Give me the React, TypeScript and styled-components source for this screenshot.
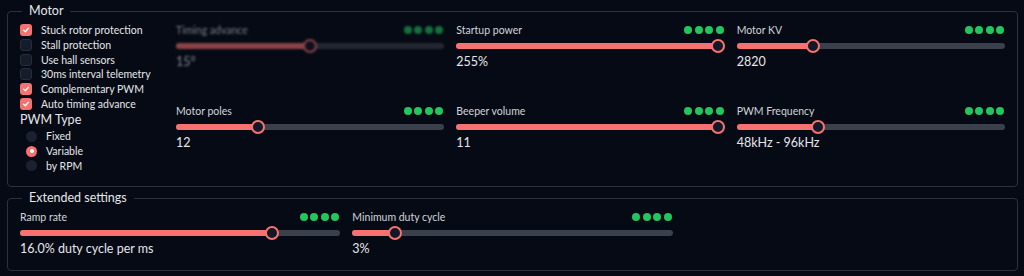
import React from "react";
import styled, { createGlobalStyle, css } from "styled-components";

const GlobalStyle = createGlobalStyle`
  html, body {
    margin: 0;
    padding: 0;
    background: #060a14;
    font-family: Lato, "Noto Sans", sans-serif;
    color: #e5e7eb;
  }
`;

const Page = styled.div`
  padding: 3px 6px 0 7px;
  display: flex;
  flex-direction: column;
  gap: 3px;
`;

const Fieldset = styled.fieldset<{ $bottom: number }>`
  margin: 0;
  border: 1px solid #2b313d;
  border-radius: 4px;
  padding: 4px 12px ${(p) => p.$bottom}px 12px;
  min-width: 0;
`;

const Legend = styled.legend`
  padding: 0 7px;
  margin-left: 2px;
  font-size: 12.5px;
  line-height: 16px;
  color: #e5e7eb;
`;

const MotorBody = styled.div`
  display: flex;
  gap: 12px;
`;

const Options = styled.div`
  width: 144px;
  flex-shrink: 0;
  display: flex;
  flex-direction: column;
`;

const CheckRow = styled.label`
  display: flex;
  align-items: center;
  height: 14.7px;
  font-size: 10.5px;
  color: #e5e7eb;
  white-space: nowrap;
`;

const Box = styled.span<{ $checked: boolean }>`
  width: 12px;
  height: 12px;
  box-sizing: border-box;
  border-radius: 3px;
  margin-right: 9px;
  display: flex;
  align-items: center;
  justify-content: center;
  ${(p) =>
    p.$checked
      ? css`
          background: #f87171;
        `
      : css`
          background: #161c29;
          border: 1px solid #262d3b;
        `}
`;

const GroupTitle = styled.div`
  font-size: 12.5px;
  line-height: 18px;
  color: #e5e7eb;
`;

const RadioRow = styled.label`
  display: flex;
  align-items: center;
  height: 14.7px;
  padding-left: 6px;
  font-size: 10.5px;
  color: #e5e7eb;
`;

const Radio = styled.span<{ $checked: boolean }>`
  width: 11px;
  height: 11px;
  border-radius: 50%;
  margin-right: 9px;
  display: flex;
  align-items: center;
  justify-content: center;
  background: ${(p) => (p.$checked ? "#f87171" : "#1b2131")};
  &::after {
    content: "";
    display: ${(p) => (p.$checked ? "block" : "none")};
    width: 4px;
    height: 4px;
    border-radius: 50%;
    background: #ffffff;
  }
`;

const SliderGrid = styled.div`
  flex: 1;
  display: grid;
  grid-template-columns: repeat(3, 1fr);
  column-gap: 12px;
  row-gap: 35px;
  align-content: start;
`;

const SliderBlock = styled.div<{ $disabled?: boolean }>`
  display: flex;
  flex-direction: column;
  min-width: 0;
  ${(p) =>
    p.$disabled &&
    css`
      filter: blur(1px);
      opacity: 0.55;
    `}
`;

const SliderHead = styled.div`
  display: flex;
  justify-content: space-between;
  align-items: center;
  height: 14px;
`;

const SliderLabel = styled.span`
  font-size: 10.5px;
  color: #d1d5db;
`;

const Dots = styled.div`
  display: flex;
  gap: 2.5px;
  padding-right: 1px;
`;

const Dot = styled.span`
  width: 8px;
  height: 8px;
  border-radius: 50%;
  background: #22c55e;
`;

const TrackWrap = styled.div`
  position: relative;
  height: 16px;
  margin-top: 1px;
  display: flex;
  align-items: center;
`;

const Track = styled.div`
  width: 100%;
  height: 6px;
  border-radius: 3px;
  background: #3a404c;
  overflow: hidden;
`;

const Fill = styled.div`
  height: 100%;
  background: #f87171;
`;

const Thumb = styled.div`
  position: absolute;
  top: 1px;
  width: 14px;
  height: 14px;
  box-sizing: border-box;
  border-radius: 50%;
  border: 2px solid #f87171;
  background: #111827;
  transform: translateX(-7px);
`;

const Value = styled.div`
  font-size: 12.5px;
  line-height: 15px;
  color: #e5e7eb;
`;

const ExtendedGrid = styled.div`
  display: grid;
  grid-template-columns: repeat(3, 1fr);
  column-gap: 12px;
`;

const Check = () => (
  <svg width="8" height="8" viewBox="0 0 10 10">
    <path d="M2 5.2 L4.2 7.2 L8 2.8" fill="none" stroke="#fff" strokeWidth="1.6" strokeLinecap="round" strokeLinejoin="round" />
  </svg>
);

interface SliderProps {
  label: string;
  value: string;
  fraction: number;
  disabled?: boolean;
}

const Slider: React.FC<SliderProps> = ({ label, value, fraction, disabled }) => {
  // thumb centre moves between 7px from each end of the track
  const pos = `calc(7px + (100% - 14px) * ${fraction})`;
  return (
    <SliderBlock $disabled={disabled}>
      <SliderHead>
        <SliderLabel>{label}</SliderLabel>
        <Dots>
          <Dot />
          <Dot />
          <Dot />
          <Dot />
        </Dots>
      </SliderHead>
      <TrackWrap>
        <Track>
          <Fill style={{ width: pos }} />
        </Track>
        <Thumb style={{ left: pos }} />
      </TrackWrap>
      <Value>{value}</Value>
    </SliderBlock>
  );
};

const checks = [
  { label: "Stuck rotor protection", checked: true },
  { label: "Stall protection", checked: false },
  { label: "Use hall sensors", checked: false },
  { label: "30ms interval telemetry", checked: false },
  { label: "Complementary PWM", checked: true },
  { label: "Auto timing advance", checked: true },
];

const radios = [
  { label: "Fixed", checked: false },
  { label: "Variable", checked: true },
  { label: "by RPM", checked: false },
];

const motorSliders: SliderProps[] = [
  { label: "Timing advance", value: "15°", fraction: 0.5, disabled: true },
  { label: "Startup power", value: "255%", fraction: 1 },
  { label: "Motor KV", value: "2820", fraction: 0.273 },
  { label: "Motor poles", value: "12", fraction: 0.294 },
  { label: "Beeper volume", value: "11", fraction: 1 },
  { label: "PWM Frequency", value: "48kHz - 96kHz", fraction: 0.294 },
];

const App: React.FC = () => {
  return (
    <>
      <GlobalStyle />
      <Page>
        <Fieldset $bottom={13}>
          <Legend>Motor</Legend>
          <MotorBody>
            <Options>
              {checks.map((c) => (
                <CheckRow key={c.label}>
                  <Box $checked={c.checked}>{c.checked && <Check />}</Box>
                  {c.label}
                </CheckRow>
              ))}
              <GroupTitle>PWM Type</GroupTitle>
              {radios.map((r) => (
                <RadioRow key={r.label}>
                  <Radio $checked={r.checked} />
                  {r.label}
                </RadioRow>
              ))}
            </Options>
            <SliderGrid>
              {motorSliders.map((s) => (
                <Slider key={s.label} {...s} />
              ))}
            </SliderGrid>
          </MotorBody>
        </Fieldset>
        <Fieldset $bottom={14}>
          <Legend>Extended settings</Legend>
          <ExtendedGrid>
            <Slider label="Ramp rate" value="16.0% duty cycle per ms" fraction={0.8} />
            <Slider label="Minimum duty cycle" value="3%" fraction={0.118} />
          </ExtendedGrid>
        </Fieldset>
      </Page>
    </>
  );
};

export default App;
